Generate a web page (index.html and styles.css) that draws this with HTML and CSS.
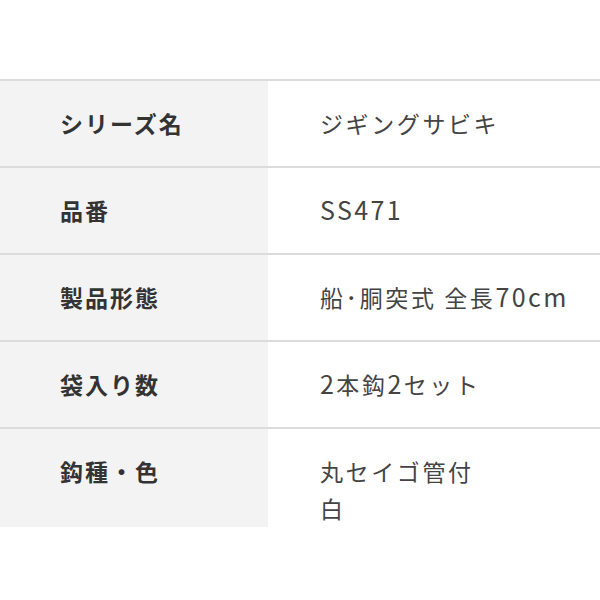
FILE: index.html
```html
<!DOCTYPE html>
<html lang="ja">
<head>
<meta charset="utf-8">
<link rel="stylesheet" href="styles.css">
</head>
<body>
<div class="spec">
  <div class="row"><div class="label">シリーズ名</div><div class="value">ジギングサビキ</div></div>
  <div class="row"><div class="label">品番</div><div class="value"><span class="latin">SS471</span></div></div>
  <div class="row"><div class="label">製品形態</div><div class="value">船･胴突式 全長<span class="latin">70cm</span></div></div>
  <div class="row"><div class="label">袋入り数</div><div class="value"><span class="latin">2</span>本鈎<span class="latin">2</span>セット</div></div>
  <div class="row last"><div class="label">鈎種・色</div><div class="value">丸セイゴ管付<br>白</div></div>
</div>
</body>
</html>
```
FILE: styles.css
```css
html, body {
  margin: 0;
  padding: 0;
  background: #fff;
}
body {
  font-family: "Noto Sans CJK JP", "Noto Sans", sans-serif;
  font-size: 23px;
  line-height: 37px;
}
.spec {
  margin-top: 79px;
  border-top: 2px solid #dcdcdc;
}
.row {
  display: grid;
  grid-template-columns: 268px 1fr;
  border-bottom: 2px solid #dcdcdc;
}
.row.last {
  border-bottom: none;
}
.label {
  background: #f3f3f3;
  color: #333;
  font-weight: 700;
  padding: 24px 0 24px 60px;
  letter-spacing: 2px;
}
.value {
  color: #444;
  padding: 24px 0 24px 52px;
  letter-spacing: 2.6px;
}
.latin {
  font-size: 25px;
  line-height: 1;
  letter-spacing: 2.4px;
}
.row.last .value {
  padding-bottom: 0;
}
```
